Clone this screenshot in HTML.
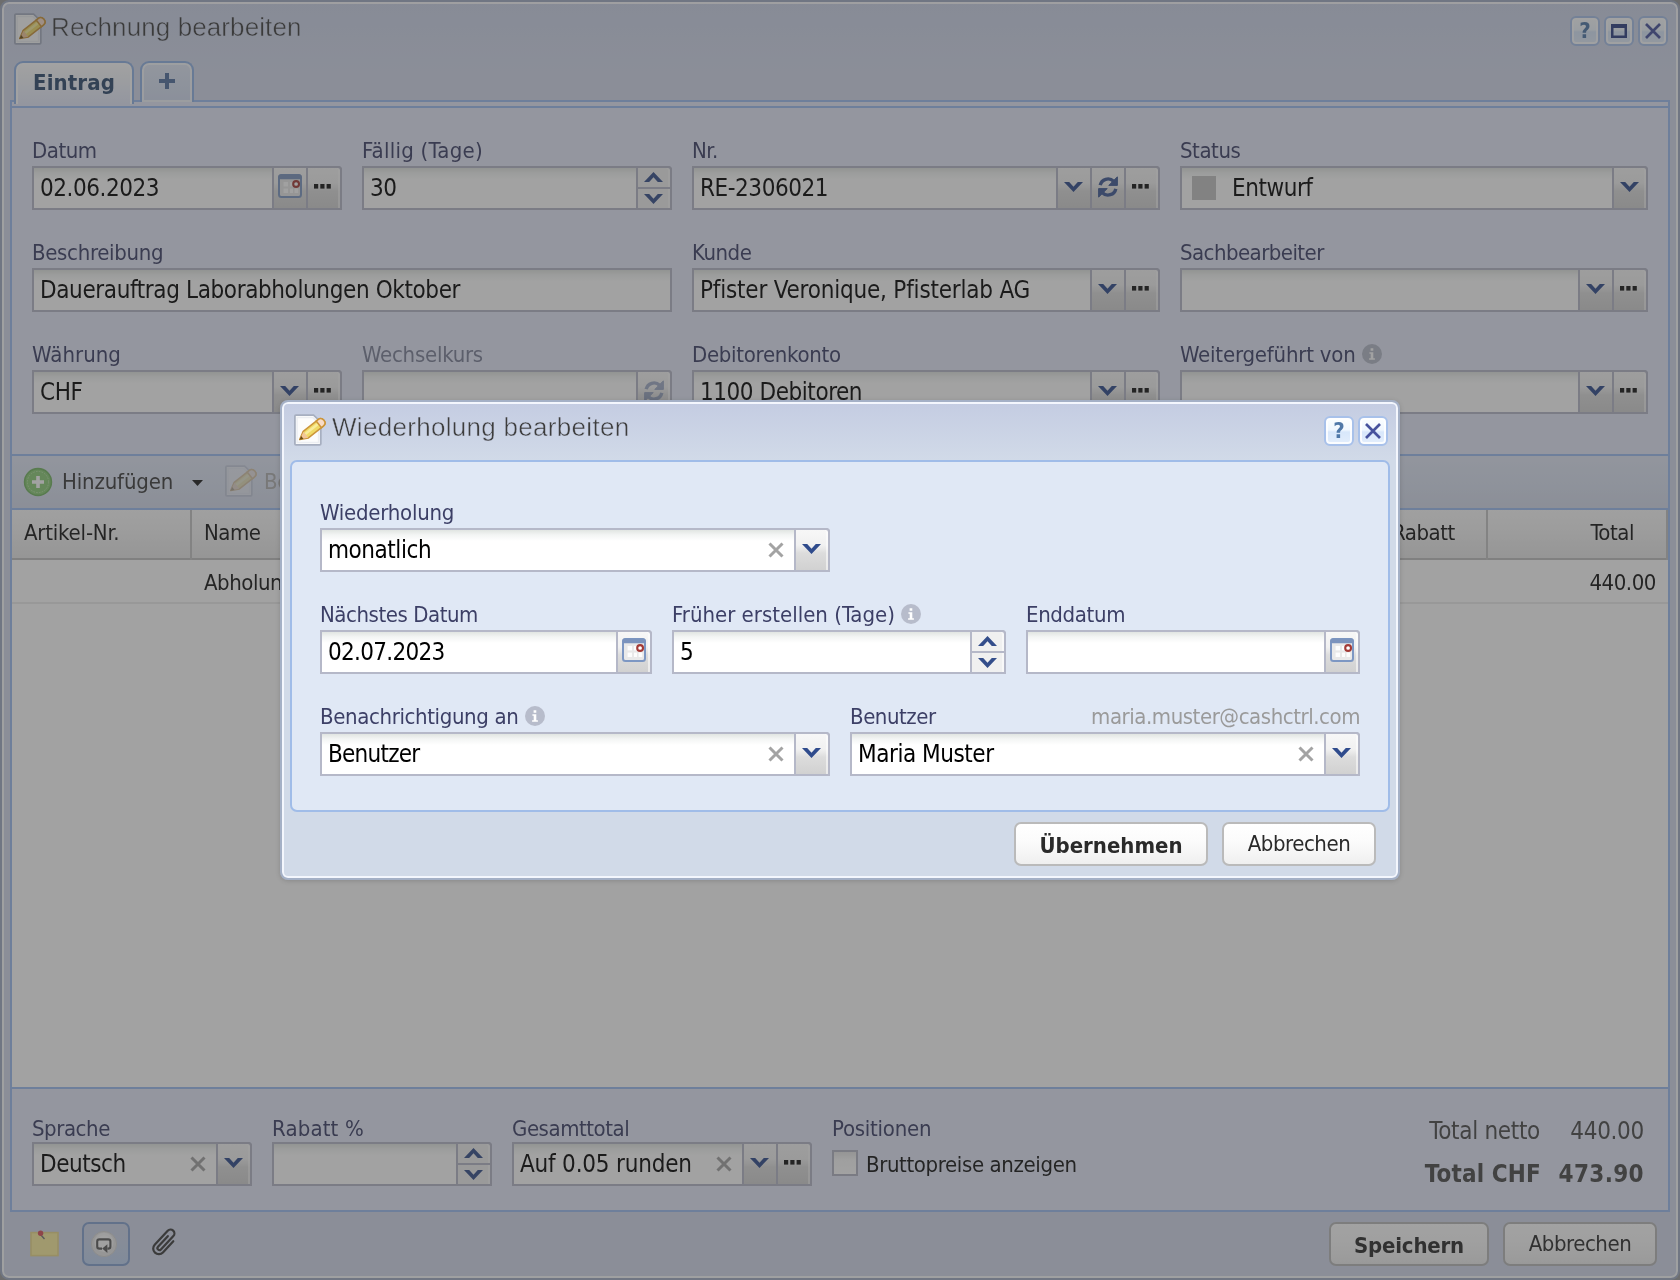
<!DOCTYPE html>
<html lang="de">
<head>
<meta charset="utf-8">
<title>Rechnung bearbeiten</title>
<style>
html,body{margin:0;padding:0}
body{width:1680px;height:1280px;overflow:hidden;position:relative;background:#9c9c9c;
  font-family:"DejaVu Sans Condensed","Liberation Sans",sans-serif;color:#000}
*{box-sizing:border-box}
.a{position:absolute}
.layer{position:absolute;left:0;top:0;width:1680px;height:1280px}
svg{display:block;position:absolute;overflow:visible}
.win{position:absolute;left:0;top:0;width:1680px;height:1280px;border:2px solid #a1adc4;border-radius:9px;
  background:linear-gradient(#cdd4e9 0,#d3daed 70px,#d3daed 100%);box-shadow:inset 0 0 0 2px rgba(255,255,255,.88)}
.title{position:absolute;font-family:"Liberation Sans",sans-serif;font-size:26px;line-height:30px;color:#3d3d3d;white-space:nowrap;-webkit-text-stroke:.5px #cfd6ea}
.tool{position:absolute;width:30px;height:30px;border:2px solid #a8c1ea;border-radius:6px;
  background:linear-gradient(#fbfeff 0,#eff7ff 46%,#d8e7fb 54%,#e3eefc 100%);box-shadow:inset 0 0 0 2px rgba(255,255,255,.85)}
.tool b{position:absolute;left:0;right:0;top:0;text-align:center;font-family:"DejaVu Sans Condensed","Liberation Sans",sans-serif;font-weight:bold;font-size:22px;line-height:26px;color:#4f78a8}
.tab{position:absolute;top:61px;height:41px;border:2px solid #92b4e6;border-bottom:0;border-radius:9px 9px 0 0;
  background:linear-gradient(#e2e9f7 0,#d2dcf0 100%);box-shadow:inset 0 0 0 2px rgba(255,255,255,.7)}
.tab.act{background:linear-gradient(#ffffff 0,#f6f8fc 30%,#e4e9fa 100%);height:43px;box-shadow:inset 0 2px 0 0 #fff, inset 2px 0 0 0 #fff, inset -2px 0 0 0 #fff}
.tab span{position:absolute;left:0;right:0;text-align:center;white-space:nowrap}
.strip{position:absolute;left:10px;top:100px;width:1660px;height:8px;border:2px solid #9ebef1;border-bottom:0;background:#e4e9fa}
.body{position:absolute;left:10px;top:106px;width:1660px;height:1106px;border:2px solid #9ebef1;background:#e4e9fa}
.hl{position:absolute;left:12px;width:1656px;height:2px;background:#9ebef1}
.lbl{position:absolute;font-size:22px;line-height:26px;color:#3c3f66;white-space:nowrap;letter-spacing:-.45px}
.lbl.dis{color:#7c8098}
.f{position:absolute;height:44px;border:2px solid #b5b8c8;background:#fff linear-gradient(#e1e5e2 0,#f3f5f4 5px,#fff 11px) no-repeat;
  font-size:24px;line-height:40px;padding-left:6px;white-space:nowrap;letter-spacing:-.45px;color:#000}
.tg{position:absolute;right:-2px;top:-2px;height:44px;display:flex}
.t{position:relative;width:34px;height:44px;border:2px solid #b5b8c8;border-right:0;
  background:linear-gradient(#f7f7f7 0,#f1f1f1 38%,#dcdcdc 58%,#d1d1d1 100%)}
.t:last-child{width:36px;border-right:2px solid #b5b8c8;border-top-right-radius:4px;box-shadow:inset -2px 0 0 0 rgba(255,255,255,.55)}
.t.sp{background:#f0f0f0}
.t.sp:after{content:"";position:absolute;left:0;right:0;top:19px;height:2px;background:#b5b8c8}
.clr{position:absolute;top:12px;width:16px;height:16px}
.btn{position:absolute;height:44px;border:2px solid #bababa;border-radius:7px;background:linear-gradient(#ffffff 0,#fbfbfb 45%,#efefef 100%);
  font-size:22px;line-height:39px;text-align:center;color:#2a2a2a;white-space:nowrap;letter-spacing:-.45px}
.btn.b{font-weight:bold;line-height:43px}
.gh{position:absolute;top:0;height:50px;font-size:22px;line-height:45px;color:#111;white-space:nowrap;letter-spacing:-.45px;border-right:2px solid #c4c4c4;padding-left:12px}
.mask{position:absolute;left:0;top:0;width:1680px;height:1280px;background:rgba(58,58,58,.47)}
.dlg{position:absolute;left:280px;top:400px;width:1120px;height:480px;border:2px solid #a4b0c6;border-radius:8px;
  background:linear-gradient(#c4cce2 0,#d1dae8 58px,#d1dae8 100%);box-shadow:inset 0 0 0 2px #f3f6fd,0 1px 5px rgba(0,0,0,.16)}
.dbody{position:absolute;left:290px;top:460px;width:1100px;height:352px;border:2px solid #a0bce8;border-radius:7px;background:#e0e8f5}
</style>
</head>
<body>
<div id="root" class="layer" style="will-change:transform">

<svg width="0" height="0" style="position:absolute">
<defs>
  <symbol id="chev" viewBox="0 0 19 10"><path d="M0 0H5.2L9.5 4.7L13.8 0H19L9.5 10Z"/></symbol>
  <symbol id="chevu" viewBox="0 0 19 10"><path d="M0 10H5.2L9.5 5.3L13.8 10H19L9.5 0Z"/></symbol>
  <symbol id="dots" viewBox="0 0 17 5"><rect x="0" y="0" width="4.2" height="4.6"/><rect x="6.3" y="0" width="4.2" height="4.6"/><rect x="12.6" y="0" width="4.2" height="4.6"/></symbol>
  <symbol id="x" viewBox="0 0 16 16"><path d="M1.5 1.5L14.5 14.5M14.5 1.5L1.5 14.5" fill="none" stroke-width="3"/></symbol>
  <symbol id="cal" viewBox="0 0 24 24">
    <rect x="1" y="1" width="22" height="22" rx="2.5" fill="#e9e9e9" stroke="#7d97c3" stroke-width="2"/>
    <rect x="0.4" y="0.4" width="23.2" height="4.8" rx="2" fill="#7b93bd"/>
    <g fill="#fdfdfd"><rect x="5.6" y="8" width="4.4" height="4.4"/><rect x="12" y="8" width="3" height="4.4"/><rect x="5.6" y="14.6" width="4.4" height="4.4"/><rect x="12" y="14.6" width="3" height="4.4"/><rect x="16.6" y="14.6" width="3.6" height="4.4"/></g>
    <circle cx="18.1" cy="10" r="2.9" fill="#fff" stroke="#a33a36" stroke-width="2.1"/>
  </symbol>
  <symbol id="ref" viewBox="0 0 20 22">
    <path d="M2.2 9.2A8 8 0 0 1 15.6 5.2" fill="none" stroke-width="3.4"/>
    <path d="M19.4 0.8V9.4H10.8Z"/>
    <path d="M17.8 12.8A8 8 0 0 1 4.4 16.8" fill="none" stroke-width="3.4"/>
    <path d="M0.6 21.2V12.6H9.2Z"/>
  </symbol>
  <symbol id="info" viewBox="0 0 20 20">
    <circle cx="10" cy="10" r="10"/>
    <path d="M7.4 8.2H11.3V14.2H12.9V15.8H7.1V14.2H8.7V9.8H7.4ZM8.6 4.3H11.3V6.8H8.6Z" fill="#fff"/>
  </symbol>
  <symbol id="edit" viewBox="0 0 32 34">
    <path d="M0.9 2.2Q0.9 1.2 1.9 1.2H19.6L26.8 8.2V29.8Q26.8 30.8 25.8 30.8H1.9Q0.9 30.8 0.9 29.8Z" fill="#fcfcfc" stroke="#a7afc0" stroke-width="1.8"/>
    <path d="M3.1 3.4H18.8L24.6 9.1V28.6H3.1Z" fill="none" stroke="#eceef2" stroke-width="1.5"/>
    <g transform="translate(5.7 25.5) rotate(-38.4)">
      <path d="M0 0L7.8 -4.2H26.8Q30.9 -4.2 30.9 0Q30.9 4.2 26.8 4.2H7.8Z" fill="#f0da66" stroke="#cc953a" stroke-width="1.5" stroke-linejoin="round"/>
      <rect x="7.8" y="-2.1" width="16.6" height="2.5" fill="#f8ec9c"/>
      <path d="M0.4 0L7.8 -3.8V3.8Z" fill="#f2c69a"/>
      <path d="M-0.3 0L3.4 -1.9V1.9Z" fill="#6b4d12"/>
      <path d="M24.4 -4.2H26.8Q30.9 -4.2 30.9 0Q30.9 4.2 26.8 4.2H24.4Z" fill="#f8dcc8" stroke="#cc953a" stroke-width="1.5"/>
    </g>
  </symbol>
</defs>
</svg>
<div class="win"></div>
<div class="layer">
  <svg style="left:14px;top:13px" width="32" height="34"><use href="#edit"/></svg>
  <div class="title" style="left:51px;top:12px;letter-spacing:.1px">Rechnung bearbeiten</div>
  <div class="tool" style="left:1570px;top:16px"><b>?</b></div>
  <div class="tool" style="left:1604px;top:16px"><svg style="left:5px;top:6px" width="16" height="14"><rect x="1.25" y="1.25" width="13.5" height="11.5" fill="none" stroke="#2c3f82" stroke-width="2.5"/><rect x="0" y="0" width="16" height="4" fill="#2c3f82"/></svg></div>
  <div class="tool" style="left:1638px;top:16px"><svg style="left:5px;top:5px" width="16" height="16"><path d="M1 1L15 15M15 1L1 15" fill="none" stroke="#46529d" stroke-width="2.7"/></svg></div>
  <div class="strip"></div>
  <div class="tab act" style="left:14px;width:120px"><span style="top:6px;font-weight:bold;font-size:22px;line-height:28px;color:#2f4a6e;letter-spacing:.1px">Eintrag</span></div>
  <div class="tab" style="left:140px;width:54px"><svg style="left:17px;top:10px" width="16" height="16"><path d="M0 8H16M8 0V16" stroke="#52709f" stroke-width="4" fill="none"/></svg></div>
  <div class="body"></div>
  <div class="lbl" style="left:32px;top:138px">Datum</div>
  <div class="f" style="left:32px;top:166px;width:310px;border-top-right-radius:4px">02.06.2023<div class="tg"><div class="t"><svg style="left:4px;top:6px" width="24" height="24"><use href="#cal"/></svg></div><div class="t"><svg style="left:6px;top:16px" width="17" height="5" fill="#111"><use href="#dots"/></svg></div></div></div>
  <div class="lbl" style="left:362px;top:138px;letter-spacing:0.25px">Fällig (Tage)</div>
  <div class="f" style="left:362px;top:166px;width:310px;border-top-right-radius:4px">30<div class="tg"><div class="t sp"><svg style="left:6px;top:4px" width="19" height="10" fill="#344e8b"><use href="#chevu"/></svg><svg style="left:6px;top:26px" width="19" height="10" fill="#344e8b"><use href="#chev"/></svg></div></div></div>
  <div class="lbl" style="left:692px;top:138px">Nr.</div>
  <div class="f" style="left:692px;top:166px;width:468px;border-top-right-radius:4px">RE-2306021<div class="tg"><div class="t"><svg style="left:6px;top:14px" width="19" height="10" fill="#2f4b8c"><use href="#chev"/></svg></div><div class="t"><svg style="left:6px;top:8px" width="20" height="22" fill="#3f5a96" stroke="#3f5a96"><use href="#ref"/></svg></div><div class="t"><svg style="left:6px;top:16px" width="17" height="5" fill="#111"><use href="#dots"/></svg></div></div></div>
  <div class="lbl" style="left:1180px;top:138px">Status</div>
  <div class="f" style="left:1180px;top:166px;width:468px;border-top-right-radius:4px"><span class="a" style="left:10px;top:8px;width:24px;height:24px;background:#c2c2c2"></span><span style="padding-left:44px">Entwurf</span><div class="tg"><div class="t"><svg style="left:6px;top:14px" width="19" height="10" fill="#2f4b8c"><use href="#chev"/></svg></div></div></div>
  <div class="lbl" style="left:32px;top:240px;letter-spacing:-0.32px">Beschreibung</div>
  <div class="f" style="left:32px;top:268px;width:640px;letter-spacing:-0.38px">Dauerauftrag Laborabholungen Oktober<div class="tg"></div></div>
  <div class="lbl" style="left:692px;top:240px">Kunde</div>
  <div class="f" style="left:692px;top:268px;width:468px;letter-spacing:-0.2px;border-top-right-radius:4px">Pfister Veronique, Pfisterlab AG<div class="tg"><div class="t"><svg style="left:6px;top:14px" width="19" height="10" fill="#2f4b8c"><use href="#chev"/></svg></div><div class="t"><svg style="left:6px;top:16px" width="17" height="5" fill="#111"><use href="#dots"/></svg></div></div></div>
  <div class="lbl" style="left:1180px;top:240px;letter-spacing:-0.55px">Sachbearbeiter</div>
  <div class="f" style="left:1180px;top:268px;width:468px;border-top-right-radius:4px"><div class="tg"><div class="t"><svg style="left:6px;top:14px" width="19" height="10" fill="#2f4b8c"><use href="#chev"/></svg></div><div class="t"><svg style="left:6px;top:16px" width="17" height="5" fill="#111"><use href="#dots"/></svg></div></div></div>
  <div class="lbl" style="left:32px;top:342px;letter-spacing:0.05px">Währung</div>
  <div class="f" style="left:32px;top:370px;width:310px;border-top-right-radius:4px">CHF<div class="tg"><div class="t"><svg style="left:6px;top:14px" width="19" height="10" fill="#2f4b8c"><use href="#chev"/></svg></div><div class="t"><svg style="left:6px;top:16px" width="17" height="5" fill="#111"><use href="#dots"/></svg></div></div></div>
  <div class="lbl dis" style="left:362px;top:342px;letter-spacing:-0.25px">Wechselkurs</div>
  <div class="f" style="left:362px;top:370px;width:310px;border-top-right-radius:4px"><div class="tg"><div class="t"><svg style="left:6px;top:8px" width="20" height="22" fill="#3f5a96" stroke="#3f5a96" opacity=".45"><use href="#ref"/></svg></div></div></div>
  <div class="lbl" style="left:692px;top:342px;letter-spacing:-0.3px">Debitorenkonto</div>
  <div class="f" style="left:692px;top:370px;width:468px;border-top-right-radius:4px">1100 Debitoren<div class="tg"><div class="t"><svg style="left:6px;top:14px" width="19" height="10" fill="#2f4b8c"><use href="#chev"/></svg></div><div class="t"><svg style="left:6px;top:16px" width="17" height="5" fill="#111"><use href="#dots"/></svg></div></div></div>
  <div class="lbl" style="left:1180px;top:342px;letter-spacing:-0.2px">Weitergeführt von</div>
  <svg style="left:1362px;top:344px" width="20" height="20" fill="#b4b9c9"><use href="#info"/></svg>
  <div class="f" style="left:1180px;top:370px;width:468px;border-top-right-radius:4px"><div class="tg"><div class="t"><svg style="left:6px;top:14px" width="19" height="10" fill="#2f4b8c"><use href="#chev"/></svg></div><div class="t"><svg style="left:6px;top:16px" width="17" height="5" fill="#111"><use href="#dots"/></svg></div></div></div>
  <div class="hl" style="top:454px"></div>
  <div class="a" style="left:12px;top:456px;width:1656px;height:52px;background:linear-gradient(#e1e7f6 0,#dbe2f2 50%,#d4dbec 100%)"></div>
  <div class="hl" style="top:508px"></div>
  <svg style="left:24px;top:468px" width="28" height="28"><circle cx="14" cy="14" r="13.4" fill="#8ccd77" stroke="#74b562" stroke-width="1.6"/><circle cx="14" cy="14" r="10.6" fill="none" stroke="#bfe4b0" stroke-width="1" stroke-dasharray="1.6 1.2" opacity=".8"/><path d="M14 8V20M8 14H20" stroke="#fff" stroke-width="3.6" fill="none"/></svg>
  <div class="a" style="left:62px;top:468px;font-size:22px;line-height:28px;color:#3b3b3b;letter-spacing:-.15px;white-space:nowrap">Hinzufügen</div>
  <svg style="left:192px;top:480px" width="11" height="6"><path d="M0 0H11L5.5 6Z" fill="#1c1c1c"/></svg>
  <svg style="left:225px;top:465px;opacity:.4" width="32" height="34"><use href="#edit"/></svg>
  <div class="a" style="left:264px;top:468px;font-size:22px;line-height:28px;color:#b0b0b0;letter-spacing:-.45px;white-space:nowrap">Bearbeiten</div>
  <div class="a" style="left:12px;top:510px;width:1656px;height:577px;background:#fff"></div>
  <div class="a" style="left:12px;top:510px;width:1656px;height:50px;background:linear-gradient(#fbfbfb 0,#f4f4f4 45%,#e8e8e8 100%);border-bottom:2px solid #bfbfbf">
    <div class="gh" style="left:0;width:180px;letter-spacing:-.2px">Artikel-Nr.</div>
    <div class="gh" style="left:180px;width:1188px">Name</div>
    <div class="gh" style="left:1368px;width:108px">Rabatt</div>
    <div class="gh" style="left:1476px;width:180px;text-align:right;padding-right:32px">Total</div>
  </div>
  <div class="a" style="left:12px;top:560px;width:1656px;height:44px;border-bottom:2px solid #ececec;font-size:22px;line-height:45px;letter-spacing:-.45px;color:#111;white-space:nowrap">
    <span class="a" style="left:192px;top:0">Abholungen Laborproben Oktober</span>
    <span class="a" style="right:12px;top:0">440.00</span>
  </div>
  <div class="hl" style="top:1087px"></div>
  <div class="lbl" style="left:32px;top:1116px">Sprache</div>
  <div class="f" style="left:32px;top:1142px;width:220px;border-top-right-radius:4px">Deutsch<svg class="clr" style="left:156px" width="16" height="16" stroke="#a3a3a3"><use href="#x"/></svg><div class="tg"><div class="t"><svg style="left:6px;top:14px" width="19" height="10" fill="#2f4b8c"><use href="#chev"/></svg></div></div></div>
  <div class="lbl" style="left:272px;top:1116px;letter-spacing:0.15px">Rabatt %</div>
  <div class="f" style="left:272px;top:1142px;width:220px;border-top-right-radius:4px"><div class="tg"><div class="t sp"><svg style="left:6px;top:4px" width="19" height="10" fill="#344e8b"><use href="#chevu"/></svg><svg style="left:6px;top:26px" width="19" height="10" fill="#344e8b"><use href="#chev"/></svg></div></div></div>
  <div class="lbl" style="left:512px;top:1116px">Gesamttotal</div>
  <div class="f" style="left:512px;top:1142px;width:300px;letter-spacing:-0.2px;border-top-right-radius:4px">Auf 0.05 runden<svg class="clr" style="left:202px" width="16" height="16" stroke="#a3a3a3"><use href="#x"/></svg><div class="tg"><div class="t"><svg style="left:6px;top:14px" width="19" height="10" fill="#2f4b8c"><use href="#chev"/></svg></div><div class="t"><svg style="left:6px;top:16px" width="17" height="5" fill="#111"><use href="#dots"/></svg></div></div></div>
  <div class="lbl" style="left:832px;top:1116px;letter-spacing:-0.25px">Positionen</div>
  <div class="a" style="left:832px;top:1150px;width:26px;height:26px;border:2px solid #b3b6c4;background:linear-gradient(#e6e6e6 0,#fafafa 8px,#fff 100%)"></div>
  <div class="a" style="left:866px;top:1151px;font-size:22px;line-height:28px;letter-spacing:-.38px;color:#111;white-space:nowrap">Bruttopreise anzeigen</div>
  <div class="a" style="right:36px;top:1116px;font-size:24px;line-height:30px;letter-spacing:-.3px;color:#4b4b4b;white-space:nowrap;text-align:right"><span class="a" style="right:104px;top:0">Total netto</span>440.00</div>
  <div class="a" style="right:36px;top:1159px;font-size:24px;line-height:30px;letter-spacing:.35px;font-weight:bold;color:#4b4b4b;white-space:nowrap;text-align:right"><span class="a" style="right:103px;top:0;letter-spacing:.15px">Total CHF</span>473.90</div>
  <svg style="left:30px;top:1229px" width="30" height="28"><rect x="1" y="3.6" width="27" height="23" fill="#fbef9e" stroke="#ecd98a" stroke-width="1.6"/><path d="M10 5L14.5 10" stroke="#777" stroke-width="1.4"/><circle cx="10.6" cy="4.2" r="2.7" fill="#d9505a"/></svg>
  <div class="a" style="left:82px;top:1222px;width:48px;height:44px;border:2px solid #86a3d2;border-radius:7px;background:linear-gradient(#cfd6ea 0,#cbd6ec 45%,#bfd3f1 100%)"></div>
  <svg style="left:91px;top:1231px" width="26" height="26"><circle cx="13" cy="13" r="12.6" fill="#e9e9e9" stroke="#d6d6d6" stroke-width="1"/><circle cx="13" cy="11.4" r="9.6" fill="#f7f7f7"/><circle cx="13" cy="10.6" r="6.4" fill="#fdfdfd"/><path d="M11 17.6H8.4Q6.2 17.6 6.2 15.4V10.6Q6.2 8.4 8.4 8.4H17.2Q19.4 8.4 19.4 10.6V15.4Q19.4 17.6 17.2 17.6H16.4" fill="none" stroke="#5b5b5b" stroke-width="2.1"/><path d="M11.2 17.6L16.4 13.2V22Z" fill="#5b5b5b"/></svg>
  <svg style="left:150px;top:1228px" width="28" height="30"><g transform="rotate(43 14 15) translate(14 15) scale(1.17) translate(-14 -15)" fill="none" stroke="#3d3d3d" stroke-width="1.9" stroke-linecap="round"><path d="M18.8 8.5V21.5A4.8 4.8 0 0 1 9.2 21.5V5.2A3.3 3.3 0 0 1 15.8 5.2V20.8A1.7 1.7 0 0 1 12.4 20.8V8.5"/></g></svg>
  <div class="btn b" style="left:1329px;top:1222px;width:160px;letter-spacing:-.2px">Speichern</div>
  <div class="btn" style="left:1503px;top:1222px;width:154px">Abbrechen</div>
</div>
<div class="mask"></div>
<div class="dlg"></div>
<div class="layer">
  <svg style="left:294px;top:414px" width="32" height="34"><use href="#edit"/></svg>
  <div class="title" style="left:332px;top:412px;letter-spacing:.3px;-webkit-text-stroke-color:#c9d1e5">Wiederholung bearbeiten</div>
  <div class="tool" style="left:1324px;top:416px"><b>?</b></div>
  <div class="tool" style="left:1358px;top:416px"><svg style="left:5px;top:5px" width="16" height="16"><path d="M1 1L15 15M15 1L1 15" fill="none" stroke="#46529d" stroke-width="2.7"/></svg></div>
  <div class="dbody"></div>
  <div class="lbl" style="left:320px;top:500px;letter-spacing:-0.25px">Wiederholung</div>
  <div class="f" style="left:320px;top:528px;width:510px;border-top-right-radius:4px">monatlich<svg class="clr" style="left:446px" width="16" height="16" stroke="#a3a3a3"><use href="#x"/></svg><div class="tg"><div class="t"><svg style="left:6px;top:14px" width="19" height="10" fill="#2f4b8c"><use href="#chev"/></svg></div></div></div>
  <div class="lbl" style="left:320px;top:602px">Nächstes Datum</div>
  <div class="f" style="left:320px;top:630px;width:332px;letter-spacing:-0.7px;border-top-right-radius:4px">02.07.2023<div class="tg"><div class="t"><svg style="left:4px;top:6px" width="24" height="24"><use href="#cal"/></svg></div></div></div>
  <div class="lbl" style="left:672px;top:602px;letter-spacing:0px">Früher erstellen (Tage)</div>
  <svg style="left:901px;top:604px" width="20" height="20" fill="#b7bccb"><use href="#info"/></svg>
  <div class="f" style="left:672px;top:630px;width:334px;border-top-right-radius:4px">5<div class="tg"><div class="t sp"><svg style="left:6px;top:4px" width="19" height="10" fill="#344e8b"><use href="#chevu"/></svg><svg style="left:6px;top:26px" width="19" height="10" fill="#344e8b"><use href="#chev"/></svg></div></div></div>
  <div class="lbl" style="left:1026px;top:602px;letter-spacing:-0.35px">Enddatum</div>
  <div class="f" style="left:1026px;top:630px;width:334px;border-top-right-radius:4px"><div class="tg"><div class="t"><svg style="left:4px;top:6px" width="24" height="24"><use href="#cal"/></svg></div></div></div>
  <div class="lbl" style="left:320px;top:704px;letter-spacing:-0.37px">Benachrichtigung an</div>
  <svg style="left:525px;top:706px" width="20" height="20" fill="#b7bccb"><use href="#info"/></svg>
  <div class="f" style="left:320px;top:732px;width:510px;letter-spacing:-0.75px;border-top-right-radius:4px">Benutzer<svg class="clr" style="left:446px" width="16" height="16" stroke="#a3a3a3"><use href="#x"/></svg><div class="tg"><div class="t"><svg style="left:6px;top:14px" width="19" height="10" fill="#2f4b8c"><use href="#chev"/></svg></div></div></div>
  <div class="lbl" style="left:850px;top:704px">Benutzer</div>
  <div class="lbl" style="right:320px;top:704px;color:#9a9a9a">maria.muster@cashctrl.com</div>
  <div class="f" style="left:850px;top:732px;width:510px;border-top-right-radius:4px">Maria Muster<svg class="clr" style="left:446px" width="16" height="16" stroke="#a3a3a3"><use href="#x"/></svg><div class="tg"><div class="t"><svg style="left:6px;top:14px" width="19" height="10" fill="#2f4b8c"><use href="#chev"/></svg></div></div></div>
  <div class="btn b" style="left:1014px;top:822px;width:194px;letter-spacing:0;line-height:43px">Übernehmen</div>
  <div class="btn" style="left:1222px;top:822px;width:154px">Abbrechen</div>
</div>
</div>
</body>
</html>
